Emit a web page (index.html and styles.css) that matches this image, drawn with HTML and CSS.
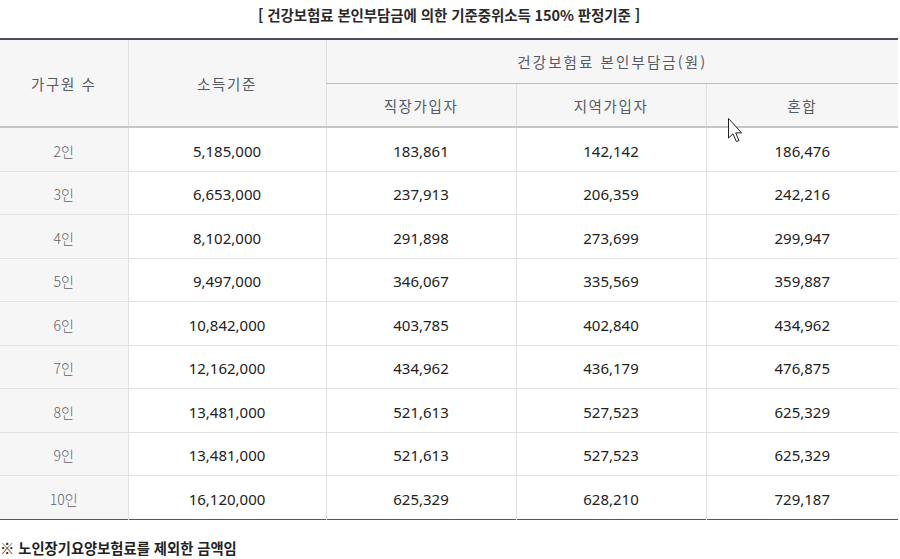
FILE: index.html
```html
<!DOCTYPE html>
<html lang="ko">
<head>
<meta charset="utf-8">
<title>건강보험료 본인부담금 판정기준</title>
<link rel="stylesheet" href="styles.css">
</head>
<body>
<div class="page">
  <p class="title">[ 건강보험료 본인부담금에 의한 기준중위소득 150% 판정기준 ]</p>
  <table class="std">
    <colgroup>
      <col class="c1"><col class="c2"><col class="c3"><col class="c4"><col class="c5">
    </colgroup>
    <thead>
      <tr class="h1">
        <th rowspan="2" class="tall">가구원 수</th>
        <th rowspan="2" class="tall">소득기준</th>
        <th colspan="3" class="wide">건강보험료 본인부담금(원)</th>
      </tr>
      <tr class="h2">
        <th>직장가입자</th>
        <th>지역가입자</th>
        <th>혼합</th>
      </tr>
    </thead>
    <tbody>
      <tr><td class="n">2인</td><td>5,185,000</td><td>183,861</td><td>142,142</td><td>186,476</td></tr>
      <tr><td class="n">3인</td><td>6,653,000</td><td>237,913</td><td>206,359</td><td>242,216</td></tr>
      <tr><td class="n">4인</td><td>8,102,000</td><td>291,898</td><td>273,699</td><td>299,947</td></tr>
      <tr><td class="n">5인</td><td>9,497,000</td><td>346,067</td><td>335,569</td><td>359,887</td></tr>
      <tr><td class="n">6인</td><td>10,842,000</td><td>403,785</td><td>402,840</td><td>434,962</td></tr>
      <tr><td class="n">7인</td><td>12,162,000</td><td>434,962</td><td>436,179</td><td>476,875</td></tr>
      <tr><td class="n">8인</td><td>13,481,000</td><td>521,613</td><td>527,523</td><td>625,329</td></tr>
      <tr><td class="n">9인</td><td>13,481,000</td><td>521,613</td><td>527,523</td><td>625,329</td></tr>
      <tr><td class="n">10인</td><td>16,120,000</td><td>625,329</td><td>628,210</td><td>729,187</td></tr>
    </tbody>
  </table>
  <p class="note">※ 노인장기요양보험료를 제외한 금액임</p>
  <svg class="cursor" width="16" height="25" viewBox="0 0 16 25" aria-hidden="true">
    <path d="M0.5 0.5 L0.5 20 L5 15.8 L8.4 23.6 L11 22.5 L7.7 14.9 L13.6 14.9 Z" fill="#fff" stroke="#222" stroke-width="1" stroke-linejoin="miter"/>
  </svg>
</div>
</body>
</html>
```

FILE: styles.css
```css
html, body {
  margin: 0;
  padding: 0;
  background: #fff;
}

.page {
  position: relative;
  width: 898px;
  font-family: "Noto Sans", "Noto Sans CJK KR", sans-serif;
  color: #222;
}

.title {
  margin: 0;
  height: 38px;
  line-height: 30px;
  text-align: center;
  font-family: "Noto Sans CJK KR", sans-serif;
  font-size: 14.5px;
  font-weight: 700;
  color: #2a2a2a;
  letter-spacing: -0.1px;
}

.std {
  width: 898px;
  border-collapse: collapse;
  table-layout: fixed;
  border-top: 2px solid #4b4e57;
  border-bottom: 1px solid #55585f;
}

.c1 { width: 128px; }
.c2 { width: 198px; }
.c3 { width: 190px; }
.c4 { width: 190px; }
.c5 { width: 192px; }

.std th {
  background: #f6f6f6;
  font-family: "Noto Sans CJK KR", sans-serif;
  font-weight: 400;
  font-size: 14.5px;
  color: #555a63;
  letter-spacing: 1.6px;
  padding: 0;
  border-left: 1px solid #e0e0e0;
  text-align: center;
}

.std th:first-child { border-left: 0; }

.h1 th { height: 43px; }
.h1 th.tall { border-bottom: 2px solid #c6c6c6; }
.h1 th.wide { border-bottom: 1px solid #bdbdbd; letter-spacing: 2.1px; }
.h2 th { height: 42px; border-bottom: 2px solid #c6c6c6; }
.h2 th:first-child { border-left: 1px solid #e0e0e0; }

.std td {
  height: 40px;
  padding: 2.5px 0 0;
  text-align: center;
  font-size: 15px;
  color: #222;
  border-top: 1px solid #e2e2e2;
  border-left: 1px solid #e2e2e2;
}

.std tbody tr:first-child td { border-top: 0; }

.std td.n {
  border-left: 0;
  background: #f6f6f6;
  color: #5f636b;
  font-family: "Noto Sans CJK KR", sans-serif;
  font-size: 14px;
  font-weight: 300;
}

.note {
  margin: 0;
  padding-top: 17px;
  font-family: "Noto Sans CJK KR", sans-serif;
  font-size: 14.3px;
  font-weight: 700;
  color: #222;
  letter-spacing: 0;
}

.cursor {
  position: absolute;
  left: 728px;
  top: 118px;
}
```
